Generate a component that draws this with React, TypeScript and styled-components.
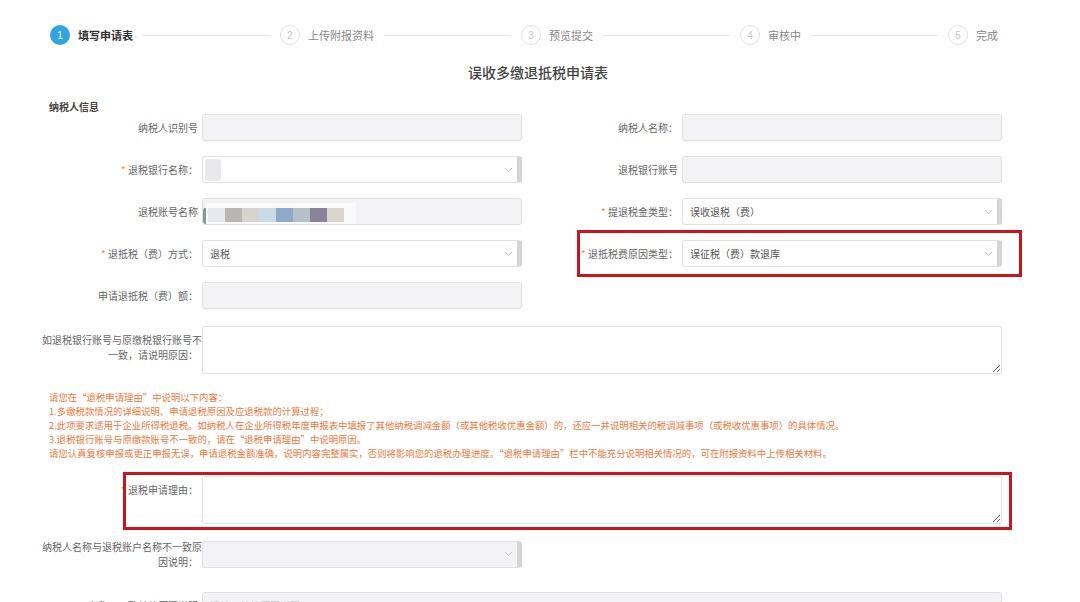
import React from 'react'
import styled, { createGlobalStyle, css } from 'styled-components'

const GlobalStyle = createGlobalStyle`
	html, body {
		margin: 0;
		padding: 0;
		background: #fff;
	}
	body {
		font-family: "Noto Sans CJK SC", "Noto Sans", sans-serif;
		color: #555;
	}
`

const Page = styled.div`
	width: 1080px;
	padding: 24px 0 40px 42px;
	box-sizing: border-box;
`

const Stepper = styled.div`
	display: flex;
	align-items: center;
	width: 948px;
	margin-left: 8px;
	height: 22px;
`

const Step = styled.div<{ $last?: boolean }>`
	display: flex;
	align-items: center;
	flex: ${(p) => (p.$last ? '0 0 auto' : '1 1 auto')};
`

const StepDot = styled.span<{ $active?: boolean }>`
	width: 20px;
	height: 20px;
	border-radius: 50%;
	box-sizing: border-box;
	display: flex;
	align-items: center;
	justify-content: center;
	font-size: 10px;
	font-family: 'Liberation Sans', sans-serif;
	${(p) =>
		p.$active
			? css`
					background: #2fa4e2;
					color: #fff;
				`
			: css`
					border: 1px solid #e2e2e2;
					color: #c4c4c4;
				`}
`

const StepLabel = styled.span<{ $active?: boolean }>`
	margin-left: 8px;
	font-size: 11px;
	white-space: nowrap;
	color: ${(p) => (p.$active ? '#333' : '#888')};
	font-weight: ${(p) => (p.$active ? 700 : 400)};
`

const StepLine = styled.span`
	flex: 1;
	height: 1px;
	background: #e6e6e6;
	margin: 0 10px;
`

const Title = styled.h2`
	margin: 16px 0 0 16px;
	width: 960px;
	text-align: center;
	font-size: 14px;
	font-weight: 500;
	color: #444;
	line-height: 20px;
`

const SectionTitle = styled.h3`
	margin: 18px 0 0 7px;
	font-size: 10px;
	font-weight: 700;
	color: #444;
	line-height: 14px;
`

const FormGrid = styled.div<{ $gap: number; $top: number }>`
	display: grid;
	grid-template-columns: 480px 480px;
	row-gap: ${(p) => p.$gap}px;
	margin-top: ${(p) => p.$top}px;
	width: 960px;
`

const Field = styled.div<{ $full?: boolean; $mark?: string; $top?: boolean; $mt?: number }>`
	position: relative;
	display: grid;
	grid-template-columns: 160px 1fr;
	align-items: ${(p) => (p.$top ? 'start' : 'center')};
	margin-top: ${(p) => p.$mt ?? 0}px;
	${(p) => p.$full && 'grid-column: 1 / -1;'}
	${(p) =>
		p.$mark &&
		css`
			&::after {
				content: '';
				position: absolute;
				inset: ${p.$mark};
				border: 3px solid #c9151e;
				pointer-events: none;
			}
		`}
`

const Label = styled.label<{ $required?: boolean; $pt?: number }>`
	text-align: right;
	padding-right: 4px;
	padding-top: ${(p) => p.$pt ?? 0}px;
	font-size: 10px;
	line-height: 15px;
	color: #666;
	white-space: nowrap;
	&::before {
		content: ${(p) => (p.$required ? "'* '" : "''")};
		color: #f0873c;
	}
`

const boxBase = css`
	height: 27px;
	box-sizing: border-box;
	border: 1px solid #e1e1e1;
	border-radius: 3px;
	font-size: 10px;
	color: #555;
	display: flex;
	align-items: center;
	padding-left: 7px;
	position: relative;
	overflow: hidden;
`

const Input = styled.div<{ $disabled?: boolean }>`
	${boxBase};
	background: ${(p) => (p.$disabled ? '#f3f3f5' : '#fff')};
`

const Select = styled.div<{ $disabled?: boolean }>`
	${boxBase};
	background: ${(p) => (p.$disabled ? '#f3f3f5' : '#fff')};
	border-right: 5px solid #d5d5d7;
	justify-content: space-between;
	padding-right: 4px;
`

const Placeholder = styled.span`
	color: #c8c8c8;
`

const TextArea = styled.textarea`
	height: 48px;
	box-sizing: border-box;
	border: 1px solid #e1e1e1;
	border-radius: 2px;
	resize: vertical;
	outline: none;
	font-family: inherit;
	font-size: 10px;
	margin: 0;
	display: block;
	width: 100%;
`

const Notes = styled.div`
	margin: 16px 0 0 7px;
	font-size: 9.4px;
	line-height: 14px;
	color: #f0773a;
	white-space: nowrap;
`

const Chevron = () => (
	<svg width="9" height="6" viewBox="0 0 9 6">
		<path d="M1 1l3.5 3.5L8 1" fill="none" stroke="#c9c9c9" strokeWidth="1" />
	</svg>
)

const Blocks = ['#e6eaee', '#b9b6b1', '#d7d3cd', '#c6dce7', '#8eaac8', '#b5c0c8', '#8a819a', '#dad6cd']

const Redacted = () => (
	<svg width="160" height="27" viewBox="0 0 160 27" style={{ position: 'absolute', left: 0, top: 0 }}>
		<rect x="0" y="9" width="5" height="16" rx="2" fill="#8b94a7" />
		<rect x="3" y="4" width="150" height="21" fill="#fafafa" />
		{Blocks.map((c, i) => (
			<rect key={i} x={5 + i * 17} y="9" width="17" height="14" fill={c} />
		))}
	</svg>
)

const Smudge = styled.span`
	position: absolute;
	left: 2px;
	top: 2px;
	width: 16px;
	height: 22px;
	border-radius: 3px;
	background: #e9e9eb;
`

const steps = ['填写申请表', '上传附报资料', '预览提交', '审核中', '完成']

const App: React.FC = () => {
	return (
		<Page>
			<GlobalStyle />
			<Stepper>
				{steps.map((s, i) => (
					<Step key={s} $last={i === steps.length - 1}>
						<StepDot $active={i === 0}>{i + 1}</StepDot>
						<StepLabel $active={i === 0}>{s}</StepLabel>
						{i < steps.length - 1 && <StepLine />}
					</Step>
				))}
			</Stepper>

			<Title>误收多缴退抵税申请表</Title>
			<SectionTitle>纳税人信息</SectionTitle>

			<FormGrid $gap={15} $top={0}>
				<Field>
					<Label>纳税人识别号</Label>
					<Input $disabled />
				</Field>
				<Field>
					<Label>纳税人名称：</Label>
					<Input $disabled />
				</Field>

				<Field>
					<Label $required>退税银行名称：</Label>
					<Select>
						<Smudge />
						<span />
						<Chevron />
					</Select>
				</Field>
				<Field>
					<Label>退税银行账号</Label>
					<Input $disabled />
				</Field>

				<Field>
					<Label>退税账号名称</Label>
					<Input $disabled>
						<Redacted />
					</Input>
				</Field>
				<Field>
					<Label $required>提退税金类型：</Label>
					<Select>
						<span>误收退税（费）</span>
						<Chevron />
					</Select>
				</Field>

				<Field>
					<Label $required>退抵税（费）方式：</Label>
					<Select>
						<span>退税</span>
						<Chevron />
					</Select>
				</Field>
				<Field $mark="-10px -20px -10px 55px">
					<Label $required>退抵税费原因类型：</Label>
					<Select>
						<span>误征税（费）款退库</span>
						<Chevron />
					</Select>
				</Field>

				<Field>
					<Label>申请退抵税（费）额：</Label>
					<Input $disabled />
				</Field>
				<div />

				<Field $full $top $mt={2}>
					<Label $pt={6}>
						如退税银行账号与原缴税银行账号不
						<br />
						一致，请说明原因：
					</Label>
					<TextArea />
				</Field>
			</FormGrid>

			<Notes>
				请您在“退税申请理由”中说明以下内容：
				<br />
				1.多缴税款情况的详细说明、申请退税原因及应退税款的计算过程；
				<br />
				2.此项要求适用于企业所得税退税。如纳税人在企业所得税年度申报表中填报了其他纳税调减金额（或其他税收优惠金额）的，还应一并说明相关的税调减事项（或税收优惠事项）的具体情况。
				<br />
				3.退税银行账号与原缴款账号不一致的，请在“退税申请理由”中说明原因。
				<br />
				请您认真复核申报或更正申报无误，申请退税金额准确，说明内容完整属实，否则将影响您的退税办理进度。“退税申请理由”栏中不能充分说明相关情况的，可在附报资料中上传相关材料。
			</Notes>

			<FormGrid $gap={15} $top={16}>
				<Field $full $top $mark="-4px -10px -6px 81px">
					<Label $required $pt={6}>
						退税申请理由：
					</Label>
					<TextArea />
				</Field>

				<Field>
					<Label>
						纳税人名称与退税账户名称不一致原
						<br />
						因说明：
					</Label>
					<Select $disabled>
						<span />
						<Chevron />
					</Select>
				</Field>
				<div />

				<Field $full $mt={8}>
					<Label>名称不一致其他原因说明</Label>
					<Input $disabled>
						<Placeholder>请输入其他原因说明</Placeholder>
					</Input>
				</Field>
			</FormGrid>
		</Page>
	)
}

export default App
